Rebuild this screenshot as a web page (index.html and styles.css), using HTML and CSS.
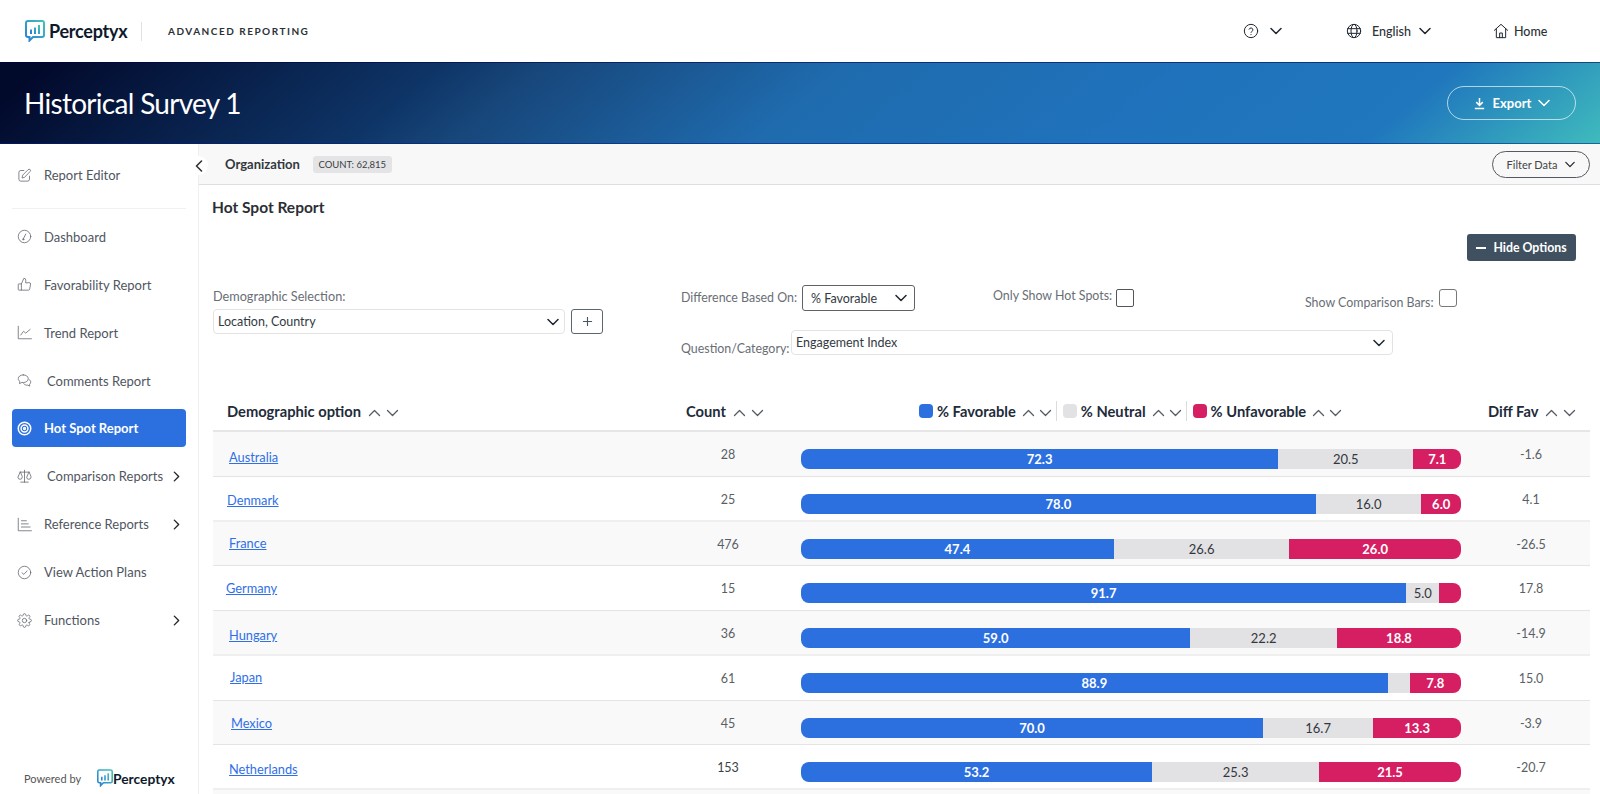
FILE: index.html
```html
<!DOCTYPE html>
<html lang="en">
<head>
<meta charset="utf-8">
<title>Historical Survey 1</title>
<link rel="stylesheet" href="styles.css">
</head>
<body>
<svg class="sprite" aria-hidden="true">
  <defs>
    <linearGradient id="lg" x1="0" y1="1" x2="1" y2="0"><stop offset="0" stop-color="#2a7fd6"/><stop offset="1" stop-color="#3fc4b4"/></linearGradient>
  </defs>
  <symbol id="logo" viewBox="0 0 20 22"><path d="M3 1h14a2 2 0 0 1 2 2v12a2 2 0 0 1-2 2H8l-3.500 3.500V17H3a2 2 0 0 1-2-2V3a2 2 0 0 1 2-2z" fill="none" stroke="url(#lg)" stroke-width="2"/><path d="M6 9.500v4.500M10 7.500v6.500M14 5v9" fill="none" stroke="url(#lg)" stroke-width="2"/></symbol>
  <symbol id="down" viewBox="0 0 12 8"><path d="M1 1.500l5 5 5-5" fill="none" stroke="currentColor" stroke-width="1.500" stroke-linecap="round" stroke-linejoin="round"/></symbol>
  <symbol id="up" viewBox="0 0 12 8"><path d="M1 6.500l5-5 5 5" fill="none" stroke="currentColor" stroke-width="1.300" stroke-linecap="round" stroke-linejoin="round"/></symbol>
  <symbol id="sdown" viewBox="0 0 12 8"><path d="M1 1.500l5 5 5-5" fill="none" stroke="currentColor" stroke-width="1.300" stroke-linecap="round" stroke-linejoin="round"/></symbol>
  <symbol id="right" viewBox="0 0 8 12"><path d="M1.500 1l5 5-5 5" fill="none" stroke="currentColor" stroke-width="1.600" stroke-linecap="round" stroke-linejoin="round"/></symbol>
</svg>

<header class="topbar">
  <div class="brand">
    <svg class="logo"><use href="#logo"/></svg>
    <span class="brand-name">Perceptyx</span>
    <span class="brand-div"></span>
    <span class="brand-sub">ADVANCED REPORTING</span>
  </div>
  <nav class="topnav">
    <span class="tn tn-help">
      <svg class="ti" viewBox="0 0 24 24"><circle cx="12" cy="12" r="10"/><path d="M9.200 9.300a2.900 2.900 0 0 1 5.600 1c0 2-2.800 2.600-2.800 3.800M12 17.300v.2"/></svg>
      <svg class="chev chev-help"><use href="#down"/></svg>
    </span>
    <span class="tn tn-lang">
      <svg class="ti" viewBox="0 0 24 24"><circle cx="12" cy="12" r="10"/><ellipse cx="12" cy="12" rx="4.500" ry="10"/><path d="M2.500 8.500h19M2.500 15.500h19"/></svg>
      <span class="tn-label tn-english">English</span>
      <svg class="chev"><use href="#down"/></svg>
    </span>
    <span class="tn tn-home">
      <svg class="ti" viewBox="0 0 24 24"><path d="M2 11l10-9 10 9M5 9v13h14V9M10 22v-7h4v7"/></svg>
      <span class="tn-label">Home</span>
    </span>
  </nav>
</header>

<section class="banner">
  <h1 class="banner-title">Historical Survey 1</h1>
  <button class="export">
    <svg class="ei" viewBox="0 0 14 14"><path d="M7 1v7.500M3.500 5.500L7 9l3.500-3.500M2 12.500h10"/></svg>
    Export
    <svg class="chev"><use href="#down"/></svg>
  </button>
</section>

<div class="main">
  <aside class="side">
    <span class="collapse"><svg class="collapse-i"><use href="#right"/></svg></span>
    <div class="nav-item first"><svg class="ni" viewBox="0 0 24 24"><path d="M11 4H6a3 3 0 0 0-3 3v11a3 3 0 0 0 3 3h11a3 3 0 0 0 3-3v-5M18 2.500a2.100 2.100 0 0 1 3 3L12 15l-4 1 1-4z"/></svg><span>Report Editor</span></div>
    <div class="nav-rule"></div>
    <div class="nav-item"><svg class="ni" viewBox="0 0 24 24"><circle cx="12" cy="12" r="10"/><path d="M10 16l4-8"/><circle cx="10" cy="16.500" r="1"/></svg><span>Dashboard</span></div>
    <div class="nav-item"><svg class="ni" viewBox="0 0 24 24"><path d="M14 9V5a3 3 0 0 0-3-3l-4 9v10h11.300a2 2 0 0 0 2-1.700l1.400-8a2 2 0 0 0-2-2.300zM7 21H3a1 1 0 0 1-1-1v-8a1 1 0 0 1 1-1h4"/></svg><span>Favorability Report</span></div>
    <div class="nav-item"><svg class="ni" viewBox="0 0 24 24"><path d="M2 2v20h21M6 16l4.500-6 3.500 3 7-6"/></svg><span>Trend Report</span></div>
    <div class="nav-item wide"><svg class="ni" viewBox="0 0 24 24"><path d="M10 3c-4.500 0-8 2.700-8 6 0 1.800 1 3.300 2.500 4.400L4 17l4-2c.6.100 1.300.2 2 .2 4.500 0 8-2.800 8-6.200S14.500 3 10 3z"/><path d="M19.500 10.500c1.600 1 2.500 2.500 2.500 4 0 1.400-.7 2.600-2 3.500l.4 3-3.400-1.600c-2.700.4-5-.6-6.300-2.400"/></svg><span>Comments Report</span></div>
    <div class="nav-item active"><svg class="ni" viewBox="0 0 24 24"><circle cx="12" cy="12" r="10"/><circle cx="12" cy="12" r="5.500"/><circle cx="12" cy="12" r="1.500"/></svg><span>Hot Spot Report</span></div>
    <div class="nav-item wide"><svg class="ni" viewBox="0 0 24 24"><path d="M12 2v19M6 21h12M5 5h14M5 5L1.500 13a3.500 3.500 0 0 0 7 0zM19 5l-3.500 8a3.500 3.500 0 0 0 7 0z"/></svg><span>Comparison Reports</span><svg class="nav-arrow"><use href="#right"/></svg></div>
    <div class="nav-item"><svg class="ni" viewBox="0 0 24 24"><path d="M2 2v20h21M7 6h8M7 11h11M7 16h14"/></svg><span>Reference Reports</span><svg class="nav-arrow"><use href="#right"/></svg></div>
    <div class="nav-item"><svg class="ni" viewBox="0 0 24 24"><circle cx="12" cy="12" r="10"/><path d="M8 12.500l3 2.500 5-5.500"/></svg><span>View Action Plans</span></div>
    <div class="nav-item"><svg class="ni" viewBox="0 0 24 24"><circle cx="12" cy="12" r="3.500"/><path d="M19.400 15a1.700 1.700 0 0 0 .3 1.800l.1.100a2 2 0 1 1-2.900 2.900l-.1-.1a1.700 1.700 0 0 0-2.800 1.200V21a2 2 0 1 1-4 0v-.1a1.700 1.700 0 0 0-2.900-1.200l-.1.100a2 2 0 1 1-2.800-2.900l.1-.1A1.700 1.700 0 0 0 3 14H3a2 2 0 1 1 0-4h.1a1.700 1.700 0 0 0 1.200-2.900l-.1-.1A2 2 0 1 1 7 4.200l.1.100A1.700 1.700 0 0 0 10 3.100V3a2 2 0 1 1 4 0v.1a1.700 1.700 0 0 0 2.900 1.200l.1-.1a2 2 0 1 1 2.800 2.800l-.1.100a1.700 1.700 0 0 0 1.200 2.900h.1a2 2 0 1 1 0 4h-.1a1.700 1.700 0 0 0-1.500 1z"/></svg><span>Functions</span><svg class="nav-arrow"><use href="#right"/></svg></div>
    <div class="powered">
      <span class="powered-by">Powered by</span>
      <svg class="logo-sm"><use href="#logo"/></svg>
      <span class="powered-name">Perceptyx</span>
    </div>
  </aside>

  <main class="content">
    <div class="orgbar">
      <strong class="org">Organization</strong>
      <span class="badge">COUNT: 62,815</span>
      <button class="filter">Filter Data <svg class="chev"><use href="#down"/></svg></button>
    </div>

    <div class="page">
      <h2 class="page-title">Hot Spot Report</h2>
      <div class="hide-row">
        <button class="hide-btn"><span class="dash"></span>Hide Options</button>
      </div>

      <div class="form">
        <div class="col-a">
          <div class="lbl lbl-demo">Demographic Selection:</div>
          <div class="demo-row">
            <div class="sel sel-demo"><span>Location, Country</span><svg class="chev"><use href="#down"/></svg></div>
            <button class="plus"><svg viewBox="0 0 12 12" class="plus-i"><path d="M6 1v10M1 6h10"/></svg></button>
          </div>
        </div>
        <div class="col-b">
          <div class="row-1">
            <span class="lbl lbl-diff">Difference Based On:</span>
            <div class="sel sel-diff"><span>% Favorable</span><svg class="chev"><use href="#down"/></svg></div>
            <span class="lbl lbl-hot">Only Show Hot Spots:</span>
            <span class="check"></span>
            <span class="lbl lbl-cmp">Show Comparison Bars:</span>
            <span class="check check-soft"></span>
          </div>
          <div class="row-2">
            <span class="lbl lbl-q">Question/Category:</span>
            <div class="sel sel-q"><span>Engagement Index</span><svg class="chev"><use href="#down"/></svg></div>
          </div>
        </div>
      </div>

      <div class="table">
        <div class="thead">
          <div class="th th-name">Demographic option<span class="sort"><svg><use href="#up"/></svg><svg><use href="#sdown"/></svg></span></div>
          <div class="th th-count">Count<span class="sort"><svg><use href="#up"/></svg><svg><use href="#sdown"/></svg></span></div>
          <div class="th th-legend">
            <i class="sw sw-fav"></i>% Favorable<span class="sort"><svg><use href="#up"/></svg><svg><use href="#sdown"/></svg></span>
            <b class="sep"></b>
            <i class="sw sw-neu"></i>% Neutral<span class="sort"><svg><use href="#up"/></svg><svg><use href="#sdown"/></svg></span>
            <b class="sep"></b>
            <i class="sw sw-unf"></i>% Unfavorable<span class="sort"><svg><use href="#up"/></svg><svg><use href="#sdown"/></svg></span>
          </div>
          <div class="th th-diff">Diff Fav<span class="sort"><svg><use href="#up"/></svg><svg><use href="#sdown"/></svg></span></div>
        </div>

        <div class="tr odd">
          <div class="td-name n1"><a href="#">Australia</a></div><div class="td-num">28</div>
          <div class="bar"><span class="seg fav" style="width:72.3%">72.3</span><span class="seg neu" style="width:20.5%">20.5</span><span class="seg unf">7.1</span></div>
          <div class="td-num">-1.6</div>
        </div>
        <div class="tr thick">
          <div class="td-name n2"><a href="#">Denmark</a></div><div class="td-num">25</div>
          <div class="bar"><span class="seg fav" style="width:78%">78.0</span><span class="seg neu" style="width:16%">16.0</span><span class="seg unf">6.0</span></div>
          <div class="td-num">4.1</div>
        </div>
        <div class="tr odd">
          <div class="td-name n3"><a href="#">France</a></div><div class="td-num">476</div>
          <div class="bar"><span class="seg fav" style="width:47.4%">47.4</span><span class="seg neu" style="width:26.6%">26.6</span><span class="seg unf">26.0</span></div>
          <div class="td-num">-26.5</div>
        </div>
        <div class="tr">
          <div class="td-name n4"><a href="#">Germany</a></div><div class="td-num">15</div>
          <div class="bar"><span class="seg fav" style="width:91.7%">91.7</span><span class="seg neu" style="width:5%">5.0</span><span class="seg unf"></span></div>
          <div class="td-num">17.8</div>
        </div>
        <div class="tr odd thick">
          <div class="td-name n5"><a href="#">Hungary</a></div><div class="td-num">36</div>
          <div class="bar"><span class="seg fav" style="width:59%">59.0</span><span class="seg neu" style="width:22.2%">22.2</span><span class="seg unf">18.8</span></div>
          <div class="td-num">-14.9</div>
        </div>
        <div class="tr">
          <div class="td-name n6"><a href="#">Japan</a></div><div class="td-num">61</div>
          <div class="bar"><span class="seg fav" style="width:88.9%">88.9</span><span class="seg neu" style="width:3.3%"></span><span class="seg unf">7.8</span></div>
          <div class="td-num">15.0</div>
        </div>
        <div class="tr odd">
          <div class="td-name n7"><a href="#">Mexico</a></div><div class="td-num">45</div>
          <div class="bar"><span class="seg fav" style="width:70%">70.0</span><span class="seg neu" style="width:16.7%">16.7</span><span class="seg unf">13.3</span></div>
          <div class="td-num">-3.9</div>
        </div>
        <div class="tr thick">
          <div class="td-name n8"><a href="#">Netherlands</a></div><div class="td-num dark">153</div>
          <div class="bar"><span class="seg fav" style="width:53.2%">53.2</span><span class="seg neu" style="width:25.3%">25.3</span><span class="seg unf">21.5</span></div>
          <div class="td-num">-20.7</div>
        </div>
        <div class="tail"></div>
      </div>
    </div>
  </main>
</div>
</body>
</html>
```

FILE: styles.css
```css
* { box-sizing: border-box; }
html, body { margin: 0; padding: 0; height: 794px; overflow: hidden; }
body { font-family: Lato, "Open Sans", sans-serif; color: #333; background: #fff; display: flex; flex-direction: column; }
button { font-family: inherit; cursor: pointer; }
.sprite { position: absolute; width: 0; height: 0; overflow: hidden; }
.chev { width: 12px; height: 8px; color: #1f2730; flex: none; }

/* top bar */
.topbar { height: 62px; flex: none; display: flex; align-items: center; justify-content: space-between; background: #fff; }
.brand { display: flex; align-items: center; padding-left: 25px; }
.logo { width: 20px; height: 22px; flex: none; }
.brand-name { font-size: 18px; font-weight: 700; color: #0e1a2c; margin-left: 4px; width: 92px; letter-spacing: -.25px; }
.brand-div { width: 1px; height: 19px; background: #dfe1e4; }
.brand-sub { margin-left: 26px; font-size: 10px; font-weight: 700; letter-spacing: 1.5px; color: #2c3138; }
.topnav { display: flex; align-items: center; height: 100%; }
.tn { display: flex; align-items: center; font-size: 12.5px; color: #2c3138; font-weight: 500; }
.ti { width: 16px; height: 16px; fill: none; stroke: #1f2730; stroke-width: 1.5; flex: none; stroke-linecap: round; stroke-linejoin: round; }
.tn-help { width: 104px; margin-right: -1px; }
.chev-help { margin-left: 11px; }
.tn-lang { width: 148px; }
.tn-english { margin-left: 10px; margin-right: 8px; }
.tn-home { width: 107px; margin-left: -1px; }
.tn-home .tn-label { margin-left: 5px; }

/* banner */
.banner { height: 82px; flex: none; display: flex; align-items: center; justify-content: space-between; padding: 0 24px 0 24px;
  background: linear-gradient(140deg, #020a2c 3%, #0e3466 26%, #17467a 32%, #1f6bae 50%, #1f72bb 70%, #2077bd 86%, #3fbbbd 100%);
  box-shadow: inset 0 1px 0 rgba(0,0,70,.55), inset 0 -1px 0 rgba(0,30,140,.55); }
.banner-title { margin: 0; font-size: 28px; font-weight: 400; color: #fff; letter-spacing: -.7px; }
.export { width: 129px; height: 34px; border-radius: 17px; background: transparent; border: 1.5px solid rgba(255,255,255,.65); color: #fff; font-size: 13px; font-weight: 700; display: flex; align-items: center; justify-content: center; gap: 7px; padding: 0; }
.export .chev { color: #fff; }
.ei { width: 13px; height: 13px; fill: none; stroke: #fff; stroke-width: 1.6; }

/* layout */
.main { flex: 1; display: flex; min-height: 0; }
.side { width: 199px; flex: none; position: relative; z-index: 2; padding: 0 12px 0 12px; border-right: 1px solid #f0f0f0; display: flex; flex-direction: column; background: #fff; }
.collapse { position: absolute; left: 189px; top: 12px; width: 19px; height: 19px; border-radius: 50%; background: #fff; display: flex; align-items: center; justify-content: center; color: #333; z-index: 2; }
.collapse-i { width: 8px; height: 12px; transform: scaleX(-1); }
.nav-item { height: 38px; margin-bottom: 9.9px; border-radius: 4px; display: flex; align-items: center; padding-left: 5px; font-size: 13px; color: #50565f; flex: none; }
.nav-item.first { margin-top: 12px; margin-bottom: 14px; }
.nav-rule { height: 1px; background: #f1f1f1; margin-bottom: 8.9px; flex: none; }
.nav-item > span { margin-left: 12px; }
.nav-item.wide > span { margin-left: 15px; }
.ni { width: 15px; height: 15px; fill: none; stroke: #666b73; stroke-width: 1.3; flex: none; stroke-linecap: round; stroke-linejoin: round; }
.nav-item.active { background: #2c70e0; color: #fff; font-weight: 700; }
.nav-item.active .ni { stroke: #fff; stroke-width: 2.4; }
.nav-arrow { width: 7px; height: 11px; margin-left: auto; margin-right: 6px; color: #22272e; flex: none; }
.powered { margin-top: auto; height: 32px; display: flex; align-items: center; padding-left: 12px; margin-bottom: 0; }
.powered-by { font-size: 11px; color: #555; width: 73px; flex: none; }
.logo-sm { width: 16px; height: 18px; flex: none; }
.powered-name { font-size: 13.8px; font-weight: 700; color: #0e1a2c; margin-left: 0; }

/* content */
.content { flex: 1; min-width: 0; display: flex; flex-direction: column; }
.orgbar { height: 41px; flex: none; background: #f8f8f8; border-bottom: 1px solid #dedede; display: flex; align-items: center; padding: 0 10px 0 26px; }
.org { font-size: 13px; font-weight: 700; color: #33373d; }
.badge { margin-left: 13px; background: #e4e4e6; border-radius: 3px; font-size: 9.5px; height: 17px; display: flex; align-items: center; padding: 0 5.5px; color: #3a3d42; }
.filter { margin-left: auto; width: 98px; height: 27px; border-radius: 14px; background: transparent; border: 1px solid #555a60; font-size: 11px; color: #444; display: flex; align-items: center; justify-content: center; gap: 8px; padding: 0; }
.filter .chev { width: 10px; height: 7px; }
.page { flex: 1; min-height: 0; padding: 13px 10px 0 14px; overflow: hidden; }
.page-title { margin: 0 0 0 -1px; font-size: 15.5px; line-height: 18px; font-weight: 700; color: #2b2f35; }
.hide-row { display: flex; justify-content: flex-end; margin-top: 18px; padding-right: 14px; }
.hide-btn { width: 109px; height: 27px; background: #3f5160; border: 0; border-radius: 3px; color: #fff; font-size: 12.3px; font-weight: 700; display: flex; align-items: center; justify-content: center; gap: 7px; padding: 0; }
.dash { width: 10px; height: 2px; background: #fff; }

/* form */
.form { display: flex; margin: 24px 0 0 0; height: 70px; }
.col-a { width: 390px; flex: none; padding-top: 3px; }
.lbl { font-size: 12.4px; line-height: 16px; color: #696e75; white-space: nowrap; }
.lbl-demo { font-size: 12.7px; }
.sel { border: 1px solid #e3e3e3; border-radius: 4px; display: flex; align-items: center; justify-content: space-between; font-size: 12.5px; color: #333a42; background: #fff; flex: none; }
.demo-row { display: flex; gap: 6px; margin-top: 5px; }
.sel-demo { width: 352px; height: 25px; padding: 0 5px 0 4px; }
.plus { width: 32px; height: 25px; background: #fff; border: 1px solid #5a6670; border-radius: 3px; padding: 0; display: flex; align-items: center; justify-content: center; }
.plus-i { width: 11px; height: 11px; fill: none; stroke: #4a555f; stroke-width: 1.2; }
.col-b { margin-left: 78px; flex: none; }
.row-1 { display: flex; height: 26px; align-items: flex-start; }
.lbl-diff { width: 118px; margin-top: 5px; margin-right: 3px; }
.sel-diff { width: 113px; height: 26px; border-color: #5f6368; border-radius: 3px; padding: 0 7px 0 8px; }
.lbl-hot { width: 119px; margin-left: 78px; margin-top: 3px; margin-right: 4px; }
.check { width: 18px; height: 18px; border: 1px solid #50565c; border-radius: 2px; margin-top: 4px; background: #fff; flex: none; }
.check-soft { border-color: #777; border-radius: 3px; }
.lbl-cmp { width: 131px; margin-left: 171px; margin-top: 10px; margin-right: 3px; }
.row-2 { display: flex; margin-top: 19px; height: 25px; align-items: flex-start; }
.lbl-q { width: 107px; margin-top: 11px; margin-right: 3px; }
.sel-q { width: 602px; height: 25px; padding: 0 7px 0 4px; }
.sel-q span { margin-top: -1px; }

/* table */
.table { margin-top: 34px; }
.thead, .tr { display: grid; grid-template-columns: 450px 130px 680px 116px; }
.thead { height: 43px; border-bottom: 2px solid #e6e6e6; }
.th { display: flex; align-items: center; font-size: 14.7px; font-weight: 700; color: #1e2b3a; height: 44px; white-space: nowrap; }
.th-name { padding-left: 14px; }
.th-count { padding-left: 23px; }
.th-legend { padding-left: 126px; }
.th-diff { padding-left: 15px; }
.sort { display: inline-flex; gap: 5px; margin-left: 7px; color: #555b62; padding-top: 3px; }
.sort svg { width: 13px; height: 8px; }
.th-legend .sort { gap: 4px; margin-left: 6px; }
.sw { width: 14px; height: 14px; border-radius: 4px; margin-right: 4px; flex: none; }
.sw-fav { background: #2c70e0; }
.sw-neu { background: #e2e2e4; }
.sw-unf { background: #d61f63; }
.sep { width: 1px; height: 20px; background: #dcdcdc; margin: 0 6px 0 4px; flex: none; }
.tr { height: 44.75px; border-bottom: 1px solid #e4e4e4; }
.tr.odd { background: #f9f9f9; }
.tr.thick { border-bottom: 2px solid #efefef; }
.td-name { font-size: 12.8px; line-height: 16px; }
.td-name a { color: #2f6fe8; text-decoration: underline; }
.n1 { padding: 17px 0 0 16px; }
.n2 { padding: 15px 0 0 14px; }
.n3 { padding: 13px 0 0 16px; }
.n4 { padding: 14px 0 0 13px; }
.n5 { padding: 16px 0 0 16px; }
.n6 { padding: 13px 0 0 17px; }
.n7 { padding: 14px 0 0 18px; }
.n8 { padding: 16px 0 0 16px; }
.td-num { padding-top: 15px; line-height: 16px; font-size: 12.5px; text-align: center; color: #5a5f66; }
.td-num.dark { color: #3a3f46; }
.bar { display: flex; height: 20px; margin: 17px 12px 0 8px; border-radius: 8px; overflow: hidden; font-size: 13px; line-height: 21px; }
.seg { display: block; text-align: center; flex: none; }
.fav { background: #2c70e0; color: #fff; font-weight: 700; }
.neu { background: #e2e2e4; color: #33373d; }
.unf { background: #d61f63; color: #fff; font-weight: 700; flex: 1; min-width: 0; }
.tail { height: 10px; background: #f9f9f9; }
```
